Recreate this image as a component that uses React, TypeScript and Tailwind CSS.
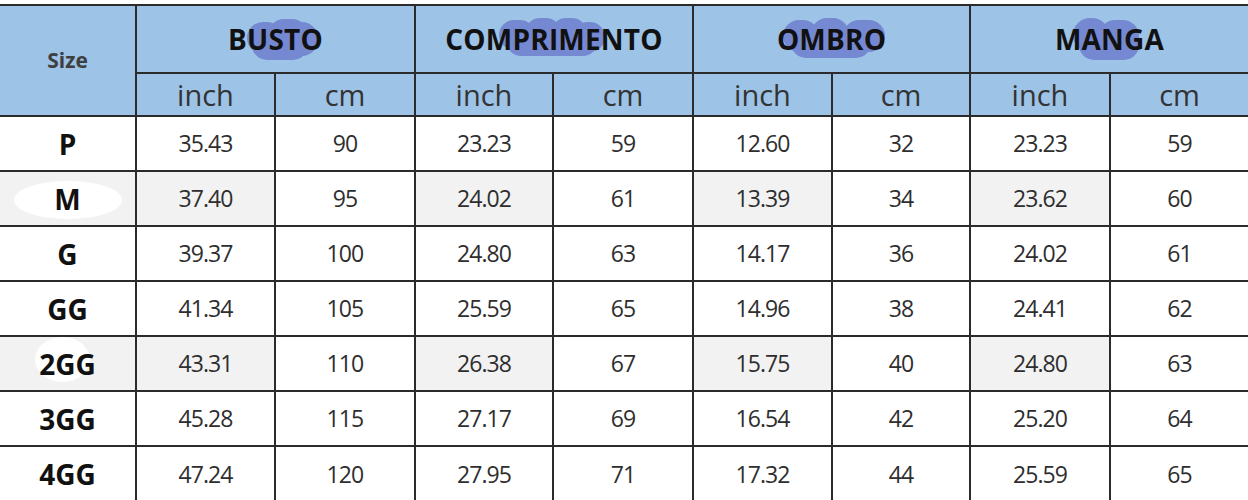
import React from "react";

type Row = { size: string; vals: string[]; shaded?: boolean; blob?: "m" | "2gg" };

const ROWS: Row[] = [
  { size: "P", vals: ["35.43", "90", "23.23", "59", "12.60", "32", "23.23", "59"] },
  { size: "M", vals: ["37.40", "95", "24.02", "61", "13.39", "34", "23.62", "60"], shaded: true, blob: "m" },
  { size: "G", vals: ["39.37", "100", "24.80", "63", "14.17", "36", "24.02", "61"] },
  { size: "GG", vals: ["41.34", "105", "25.59", "65", "14.96", "38", "24.41", "62"] },
  { size: "2GG", vals: ["43.31", "110", "26.38", "67", "15.75", "40", "24.80", "63"], shaded: true, blob: "2gg" },
  { size: "3GG", vals: ["45.28", "115", "27.17", "69", "16.54", "42", "25.20", "64"] },
  { size: "4GG", vals: ["47.24", "120", "27.95", "71", "17.32", "44", "25.59", "65"] },
];

// scribble highlight behind header words: [left, top, w, h] ellipses relative to the word box
type Bump = [number, number, number, number];

const GROUPS: { label: string; bumps: Bump[] }[] = [
  { label: "BUSTO", bumps: [[19, 4, 36, 32], [40, 1, 40, 32], [58, 4, 32, 34], [24, 12, 56, 30]] },
  {
    label: "COMPRIMENTO",
    bumps: [[54, 2, 36, 30], [80, 0, 36, 30], [106, 0, 36, 30], [128, 4, 32, 30], [62, 10, 90, 28]],
  },
  { label: "OMBRO", bumps: [[6, 2, 36, 32], [34, 0, 38, 32], [66, 2, 42, 32], [14, 10, 80, 30]] },
  { label: "MANGA", bumps: [[18, 0, 36, 34], [44, 2, 40, 32], [24, 12, 60, 30]] },
];

const line = "border-[#2b2b2b]";

function Blobbed({ label, bumps }: { label: string; bumps: Bump[] }) {
  return (
    <span className="relative inline-block">
      {bumps.map(([l, t, w, h], i) => (
        <span
          key={i}
          className="absolute rounded-full bg-[#7589d2]"
          style={{ left: l, top: t, width: w, height: h }}
        />
      ))}
      <span className="relative">{label}</span>
    </span>
  );
}

export default function App() {
  return (
    <div className="w-[1248px] h-[500px] overflow-hidden bg-white pt-[4px] font-['Open_Sans',sans-serif]">
      <table className="table-fixed border-collapse w-[1248px]">
        <colgroup>
          <col className="w-[136px]" />
          <col className="w-[139px]" />
          <col className="w-[140px]" />
          <col className="w-[138px]" />
          <col className="w-[140px]" />
          <col className="w-[139px]" />
          <col className="w-[138px]" />
          <col className="w-[140px]" />
          <col className="w-[138px]" />
        </colgroup>
        <thead>
          <tr className="h-[68px] bg-[#9dc3e6]">
            <th rowSpan={2} className={`border-2 border-l-0 ${line} text-[21px] font-bold text-[#3f3f3f]`}>
              Size
            </th>
            {GROUPS.map((g, i) => (
              <th
                key={g.label}
                colSpan={2}
                className={`border-2 ${i === GROUPS.length - 1 ? "border-r-0" : ""} ${line} text-[28px] leading-[42px] font-bold text-[#111] tracking-[0.2px]`}
              >
                <Blobbed label={g.label} bumps={g.bumps} />
              </th>
            ))}
          </tr>
          <tr className="h-[43px] bg-[#9dc3e6]">
            {Array.from({ length: 8 }).map((_, i) => (
              <th
                key={i}
                className={`border-2 ${i === 7 ? "border-r-0" : ""} ${line} text-[29px] leading-none font-normal text-[#333]`}
              >
                {i % 2 === 0 ? "inch" : "cm"}
              </th>
            ))}
          </tr>
        </thead>
        <tbody>
          {ROWS.map((r, ri) => (
            <tr key={r.size} className="h-[55px]">
              <td
                className={`border-2 border-l-0 ${ri === ROWS.length - 1 ? "border-b-0" : ""} ${line} ${
                  r.shaded ? "bg-[#f2f2f2]" : "bg-white"
                } text-center text-[28px] leading-[42px] font-bold text-[#111]`}
              >
                <span className="relative inline-block">
                  {r.blob === "m" && (
                    <span className="absolute left-[-40px] top-[3px] w-[108px] h-[38px] rounded-[50%] bg-white" />
                  )}
                  {r.blob === "2gg" && (
                    <span className="absolute left-[-4px] top-[-6px] w-[55px] h-[45px] rounded-[50%] bg-white" />
                  )}
                  <span className="relative">{r.size}</span>
                </span>
              </td>
              {r.vals.map((v, i) => (
                <td
                  key={i}
                  className={`border-2 ${i === 7 ? "border-r-0" : ""} ${ri === ROWS.length - 1 ? "border-b-0" : ""} ${line} ${
                    r.shaded && i % 2 === 0 ? "bg-[#f2f2f2]" : "bg-white"
                  } text-center text-[23px] font-medium tracking-[-0.9px] text-[#2e2e2e]`}
                >
                  {v}
                </td>
              ))}
            </tr>
          ))}
        </tbody>
      </table>
    </div>
  );
}
